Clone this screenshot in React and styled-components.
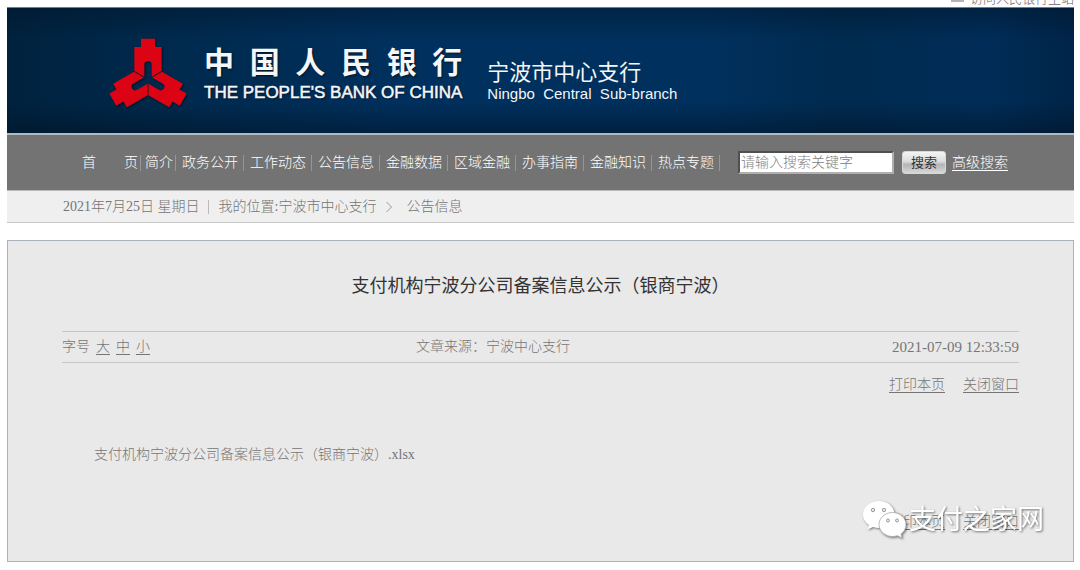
import styled, { createGlobalStyle } from "styled-components";

const navItems = [
    "政务公开",
    "工作动态",
    "公告信息",
    "金融数据",
    "区域金融",
    "办事指南",
    "金融知识",
    "热点专题",
];

const armPath =
    "M-21 -122H21V-97H41V-25L11 -8V-44A11 11 0 0 0 -11 -44V-8L-41 -25V-97H-21Z";

const BankLogo = () => (
    <Slogo viewBox="-120 -124 240 216" aria-hidden="true">
        <g fill="#dc0414">
            <path d={armPath} />
            <path d={armPath} transform="rotate(120)" />
            <path d={armPath} transform="rotate(240)" />
        </g>
    </Slogo>
);

const WechatIcon = () => (
    <svg width="44" height="38" viewBox="0 0 44 38" aria-hidden="true">
        <path
            d="M16 0C7 0 0 6 0 13.500C0 18 2.500 21.500 6 24L4.500 28.500L10 26C12 26.700 14 27 16 27C25 27 31.500 21 31.500 13.500C31.500 6 25 0 16 0Z"
            fill="#fff"
        />
        <path
            d="M29.500 11.500C22 11.500 16 17 16 23.500C16 30 22 35.500 29.500 35.500C31 35.500 33 35.200 34.500 34.700L39 37L38 33C41 31 43 27.500 43 23.500C43 17 37 11.500 29.500 11.500Z"
            fill="#fff"
            stroke="#aaa"
            strokeWidth="0.8"
        />
        <g fill="#e6e6e6" stroke="#888" strokeWidth="0.8">
            <circle cx="10" cy="9" r="1.700" />
            <circle cx="21" cy="9" r="1.700" />
            <circle cx="25" cy="19.500" r="1.500" />
            <circle cx="34" cy="19.500" r="1.500" />
        </g>
    </svg>
);

const PageActions = () => (
    <Sactions>
        <Slink href="#print">打印本页</Slink>
        <Slink href="#close">关闭窗口</Slink>
    </Sactions>
);

const App = () => {
    return (
        <Spage>
            <GlobalStyle />
            <Stop>
                <Sdash />
                <StopLink href="#main">访问人民银行主站</StopLink>
            </Stop>
            <Sbanner>
                <BankLogo />
                <Sbank>
                    <SbankName>中国人民银行</SbankName>
                    <SbankEn>THE PEOPLE'S BANK OF CHINA</SbankEn>
                </Sbank>
                <div>
                    <Sbranch>宁波市中心支行</Sbranch>
                    <SbranchEn>Ningbo  Central  Sub-branch</SbranchEn>
                </div>
            </Sbanner>
            <Snav>
                <Smenu>
                    <Sitem $narrow>
                        <a href="#home">首　　页</a>
                    </Sitem>
                    <Sitem $narrow>
                        <a href="#about">简介</a>
                    </Sitem>
                    {navItems.map((item) => (
                        <Sitem key={item}>
                            <a href={`#${item}`}>{item}</a>
                        </Sitem>
                    ))}
                </Smenu>
                <Ssearch onSubmit={(e) => e.preventDefault()}>
                    <Sinput type="text" aria-label="搜索" placeholder="请输入搜索关键字" />
                    <Sbutton type="submit">搜索</Sbutton>
                    <SwhiteLink href="#advanced">高级搜索</SwhiteLink>
                </Ssearch>
            </Snav>
            <Scrumbs>
                <Sdate>2021年7月25日 星期日</Sdate>
                <span>我的位置:宁波市中心支行</span>
                <Sarrow viewBox="0 0 6 12" aria-hidden="true">
                    <path d="M0.500 1L5.500 6L0.500 11" fill="none" stroke="#999" />
                </Sarrow>
                <span>公告信息</span>
            </Scrumbs>
            <Sarticle>
                <Stitle>支付机构宁波分公司备案信息公示（银商宁波）</Stitle>
                <Smeta>
                    <Ssizes>
                        <span>字号</span>
                        <Slink href="#large">大</Slink>
                        <Slink href="#medium">中</Slink>
                        <Slink href="#small">小</Slink>
                    </Ssizes>
                    <span>文章来源：宁波中心支行</span>
                    <Stime>2021-07-09 12:33:59</Stime>
                </Smeta>
                <PageActions />
                <Sfile>
                    <a href="#file">支付机构宁波分公司备案信息公示（银商宁波）.xlsx</a>
                </Sfile>
                <PageActions />
                <Swatermark>
                    <WechatIcon />
                    <span>支付之家网</span>
                </Swatermark>
            </Sarticle>
        </Spage>
    );
};

export default App;

const GlobalStyle = createGlobalStyle`
    * {
        box-sizing: border-box;
    }
    body {
        margin: 0;
        background: #fff;
        color: #757575;
        font-family: "Liberation Serif", "Noto Sans CJK SC", serif;
        font-size: 14px;
        font-weight: 300;
        line-height: 20px;
    }
    a {
        color: inherit;
        text-decoration: none;
    }
`;

const Spage = styled.div`
    padding: 0 6px 8px 7px;
`;

const Stop = styled.div`
    display: flex;
    justify-content: flex-end;
    align-items: flex-end;
    gap: 6px;
    height: 7px;
    overflow: hidden;
`;

const Sdash = styled.span`
    width: 13px;
    height: 2px;
    margin-bottom: 5px;
    background: #b4b4b4;
`;

const StopLink = styled.a`
    flex: none;
    font-size: 13px;
    line-height: 16px;
    color: #666;
`;

const Sbanner = styled.header`
    display: flex;
    align-items: center;
    height: 128px;
    padding: 6px 0 0 101px;
    border-top: 1px solid #6f8088;
    border-bottom: 2px solid #b0bac2;
    color: #f4f6f8;
    background:
        linear-gradient(rgba(0, 18, 36, 0.4), rgba(0, 18, 36, 0) 25%, rgba(0, 18, 36, 0) 75%, rgba(0, 18, 36, 0.5)),
        linear-gradient(90deg, #00223e, #002a4e 16%, #00305d 36%, #00305d 66%, #002b50 78%, #002d58 92%, #002448);
`;

const Slogo = styled.svg`
    width: 80px;
    height: 72px;
    margin-right: 16px;
    filter: drop-shadow(1px 1px 1px rgba(0, 0, 0, 0.5));
`;

const Sbank = styled.div`
    margin-right: 25px;
    text-shadow: 1px 1px 2px rgba(0, 0, 0, 0.6);
`;

const SbankName = styled.div`
    font-size: 30px;
    font-weight: 700;
    line-height: 36px;
    text-align-last: justify;
`;

const SbankEn = styled.div`
    padding-top: 2px;
    font-family: "Liberation Sans", sans-serif;
    font-size: 17px;
    font-weight: 400;
    line-height: 20px;
    -webkit-text-stroke: 0.5px currentColor;
`;

const Sbranch = styled.div`
    margin-top: 16px;
    font-size: 22px;
    font-weight: 400;
    line-height: 24px;
`;

const SbranchEn = styled.div`
    font-family: "Liberation Sans", sans-serif;
    font-size: 15px;
    font-weight: 400;
    line-height: 18px;
    white-space: pre;
`;

const Snav = styled.nav`
    display: flex;
    align-items: center;
    height: 56px;
    padding-left: 71px;
    border-bottom: 1px solid #b8b8b8;
    background: #737373;
    color: #fff;
`;

const Smenu = styled.ul`
    display: flex;
    margin: 0;
    padding: 0;
    list-style: none;
`;

const Sitem = styled.li`
    padding: ${(props) => (props.$narrow ? "0 2px 0 4px" : "0 5px 0 6px")};
    border-right: 1px solid #92969e;
    line-height: 16px;
    white-space: nowrap;
`;

const Ssearch = styled.form`
    display: flex;
    align-items: center;
    margin-left: 18px;
`;

const Sinput = styled.input`
    width: 156px;
    height: 23px;
    margin-right: 8px;
    padding: 0 1px;
    border: 2px solid;
    border-color: #505050 #b0b0b0 #b0b0b0 #505050;
    background: #fff;
    font: inherit;
    color: #333;

    &::placeholder {
        color: #808080;
    }
`;

const Sbutton = styled.button`
    width: 44px;
    height: 23px;
    margin-right: 6px;
    padding: 0;
    border: 1px solid #d8d8d8;
    border-radius: 3px;
    background: linear-gradient(#f4f4f4, #dcdcdc 45%, #b4b4b4 60%, #d8d8d8);
    font: inherit;
    font-size: 13px;
    font-weight: 400;
    color: #333;
`;

const Slink = styled.a`
    text-decoration: underline;
    text-underline-offset: 3px;
`;

const SwhiteLink = styled(Slink)`
    white-space: nowrap;
`;

const Scrumbs = styled.div`
    display: flex;
    align-items: center;
    height: 32px;
    padding-left: 56px;
    border-bottom: 1px solid #c8c8c8;
    background: #efefef;
`;

const Sdate = styled.span`
    margin-right: 10px;
    padding-right: 8px;
    border-right: 1px solid #bbb;
    line-height: 14px;
`;

const Sarrow = styled.svg`
    width: 6px;
    height: 12px;
    margin: 0 14px 0 10px;
`;

const Sarticle = styled.main`
    position: relative;
    margin-top: 17px;
    padding: 30px 54px 29px;
    border: 1px solid #a9b2bf;
    background: #e9e9e9;
`;

const Stitle = styled.h1`
    margin: 0;
    font-size: 18px;
    font-weight: 400;
    line-height: 30px;
    text-align: center;
    color: #333;
`;

const Smeta = styled.div`
    display: grid;
    grid-template-columns: 37% 1fr auto;
    align-items: center;
    height: 32px;
    margin-top: 30px;
    border-top: 1px solid #c6c6c6;
    border-bottom: 1px solid #c6c6c6;
`;

const Ssizes = styled.div`
    display: flex;
    gap: 6px;
`;

const Stime = styled.time`
    font-size: 15px;
`;

const Sactions = styled.div`
    display: flex;
    justify-content: flex-end;
    gap: 18px;
    padding-top: 12px;
`;

const Sfile = styled.p`
    margin: 50px 0 35px 32px;
`;

const Swatermark = styled.div`
    position: absolute;
    right: 29px;
    bottom: 22px;
    display: flex;
    align-items: center;
    gap: 2px;
    font-size: 27px;
    font-weight: 400;
    line-height: 38px;
    color: #fff;
    filter: drop-shadow(1px 1px 1px rgba(0, 0, 0, 0.5));
`;
